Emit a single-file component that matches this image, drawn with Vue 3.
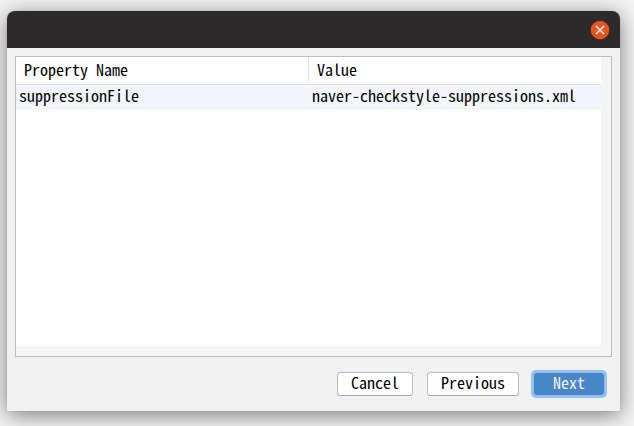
<script setup>
const columns = ['Property Name', 'Value']
const rows = [{ name: 'suppressionFile', value: 'naver-checkstyle-suppressions.xml' }]
</script>

<template>
  <div class="desktop">
    <section class="dialog">
      <header class="titlebar">
        <button class="close" aria-label="Close">
          <svg width="20" height="20" viewBox="0 0 20 20">
            <circle cx="10" cy="10" r="9.3" fill="#e95420" />
            <path d="M6 6L14 14M14 6L6 14" stroke="#fff" stroke-width="1.4" fill="none" />
          </svg>
        </button>
      </header>
      <div class="content">
        <div class="table-frame">
          <div class="table">
            <div class="head">
              <span v-for="c in columns" :key="c" class="th">{{ c }}</span>
            </div>
            <div v-for="r in rows" :key="r.name" class="row">
              <span class="td">{{ r.name }}</span>
              <span class="td">{{ r.value }}</span>
            </div>
          </div>
        </div>
        <footer class="actions">
          <button class="btn cancel">Cancel</button>
          <button class="btn previous">Previous</button>
          <button class="btn primary">Next</button>
        </footer>
      </div>
    </section>
  </div>
</template>

<style>
body {
  margin: 0;
}
</style>

<style scoped>
.desktop {
  box-sizing: border-box;
  width: 634px;
  height: 426px;
  padding: 11px 14px 15px 7px;
  overflow: hidden;
  background: #f4f4f4;
  font-family: "Noto Sans Mono CJK KR", "Noto Sans CJK KR", monospace;
  font-feature-settings: "hwid" 1;
  font-size: 16px;
  color: #000;
}
.dialog {
  display: flex;
  flex-direction: column;
  height: 400px;
  border-radius: 8px 8px 0 0;
  background: #f1f1f1;
  box-shadow: 0 4px 22px rgba(0, 0, 0, 0.5), 0 0 1px rgba(0, 0, 0, 0.35);
}
.titlebar {
  box-sizing: border-box;
  display: flex;
  align-items: center;
  justify-content: flex-end;
  height: 37px;
  padding: 1px 10px 0 0;
  border-radius: 8px 8px 0 0;
  background: #2c2a2b;
}
.close {
  display: flex;
  padding: 0;
  border: 0;
  background: none;
}
.content {
  padding: 8px 8px 0;
}
.table-frame {
  box-sizing: border-box;
  width: 597px;
  height: 301px;
  padding: 0 10px 10px 0;
  border: 1px solid #bdbdbd;
  background: #f4f4f4;
}
.table {
  height: 289px;
  background: #fff;
}
.head,
.row {
  display: grid;
  grid-template-columns: 293px 1fr;
  white-space: pre;
}
.head {
  height: 27px;
  border-bottom: 1px solid #e0e0e0;
}
.th {
  box-sizing: border-box;
  height: 25px;
  margin-top: 1px;
  padding-left: 8px;
  line-height: 23px;
}
.th:first-child {
  border-right: 1px solid #e3e3e3;
}
.row {
  height: 25px;
  background: #f2f5fa;
  line-height: 20px;
}
.td {
  padding-left: 3px;
}
.actions {
  display: flex;
  justify-content: flex-end;
  gap: 14px;
  padding: 15px 7px 0 0;
}
.btn {
  box-sizing: border-box;
  height: 24px;
  padding: 0 0 4px;
  border: 1px solid #b8b8b8;
  border-bottom-color: #a9a9a9;
  border-radius: 3px;
  background: #fff;
  color: #000;
  font: inherit;
  font-feature-settings: inherit;
  line-height: 18px;
}
.cancel {
  width: 76px;
}
.previous {
  width: 92px;
}
.primary {
  width: 72px;
  border-color: #8dbcf0;
  background: #4a86c7;
  background-clip: padding-box;
  box-shadow: 0 0 0 2px #97c3f3;
  color: #f1f1f1;
}
</style>
